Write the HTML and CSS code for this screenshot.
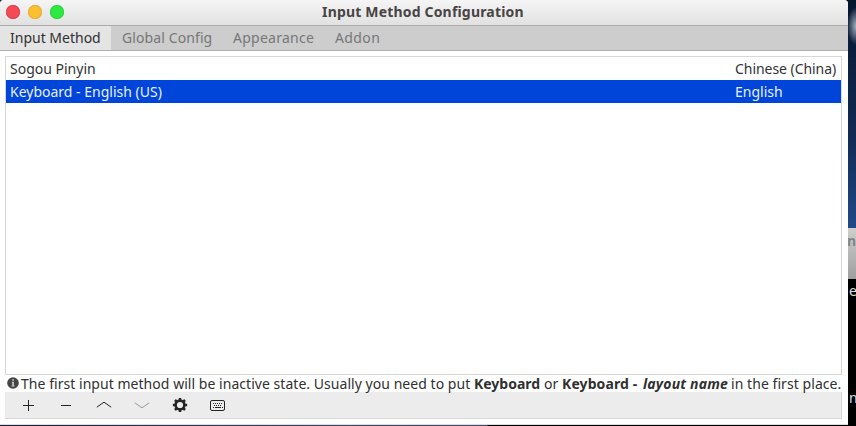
FILE: index.html
```html
<!DOCTYPE html>
<html lang="en">
<head>
<meta charset="utf-8">
<title>Input Method Configuration</title>
<link rel="stylesheet" href="styles.css">
</head>
<body>
<div class="desktop">
  <main class="window">
    <header class="titlebar">
      <div class="lights"><i class="light close"></i><i class="light minimize"></i><i class="light maximize"></i></div>
      <h1 class="title">Input Method Configuration</h1>
    </header>
    <nav class="tabs">
      <span class="tab active t-input">Input Method</span>
      <span class="tab t-global">Global Config</span>
      <span class="tab t-appearance">Appearance</span>
      <span class="tab t-addon">Addon</span>
    </nav>
    <section class="content">
      <div class="list">
        <div class="row"><span class="sogou">Sogou Pinyin</span><span class="lang chinese">Chinese (China)</span></div>
        <div class="row selected"><span class="keyboard">Keyboard - English (US)</span><span class="lang english">English</span></div>
      </div>
      <div class="info">
        <svg class="info-icon" width="12" height="12" viewBox="0 0 12 12"><circle cx="6" cy="6" r="5.8" fill="#454545"/><path d="M5.2 2.2h1.7v1.6H5.2zM4.8 4.8h2.1v3.6h.6v1H4.6v-1h.7V5.7h-.5z" fill="#ccc"/></svg>
        <span class="info-a">The first input method will be inactive state. Usually you need to put</span>
        <b class="info-b">Keyboard</b>
        <span class="info-c">or</span>
        <b class="info-d">Keyboard -</b>
        <b class="info-e"><i>layout name</i></b>
        <span class="info-f">in the first place.</span>
      </div>
      <div class="toolbar">
        <svg class="tool" viewBox="0 0 16 16"><path d="M8.5 3v11M3 8.5h11"/></svg>
        <svg class="tool" viewBox="0 0 16 16"><path d="M3 8.5h10"/></svg>
        <svg class="tool" viewBox="0 0 16 16"><path d="M.8 10.2 8 5.2l7.2 5"/></svg>
        <svg class="tool faded" viewBox="0 0 16 16"><path d="M.8 5.8 8 10.8l7.2-5"/></svg>
        <svg class="tool" viewBox="0 0 16 16"><circle cx="8" cy="8" r="4.4" stroke-width="2.6"/><path stroke-width="2.5" d="M8 .9v2.5M8 12.6v2.5M.9 8h2.5M12.6 8h2.5M3 3l1.8 1.8M11.2 11.2l1.8 1.8M3 13l1.8-1.8M11.2 4.8l1.8-1.8"/></svg>
        <svg class="tool" viewBox="0 0 16 16"><rect x=".5" y="3.5" width="14" height="10" rx="1.5"/><path stroke-dasharray="1 1" d="M3 6.5h10M4 8.5h8M3 10.5h1M12 10.5h1"/><path d="M5 10.5h6"/></svg>
      </div>
    </section>
  </main>
  <aside class="behind">
    <div class="sky"></div>
    <div class="back-title">n</div>
    <div class="terminal"><span>e</span><span>n</span></div>
  </aside>
</div>
</body>
</html>
```
FILE: styles.css
```css
* { box-sizing: border-box; }
body { margin: 0; font: 14px/23px "Noto Sans", "Open Sans", sans-serif; color: #333; }
.desktop { width: 856px; height: 426px; display: flex; overflow: hidden; background: linear-gradient(90deg, #17203f, #38436b 330px, #454b70 487px, #000 488px); }
.window { width: 848px; height: 425px; background: #fff; border-radius: 4px 4px 0 0; overflow: hidden; flex: none; border-bottom: 1px solid #ddd; }
.titlebar { height: 26px; display: grid; grid-template-columns: 322px 1fr; background: linear-gradient(#f5f5f5, #e1e1e1); border-bottom: 1px solid #aaa; }
.lights { display: flex; gap: 8px; padding: 5px 0 0 6px; }
.light { width: 14px; height: 14px; border-radius: 50%; }
.close { background: #f24b55; box-shadow: inset 0 0 0 1px #df414c; }
.minimize { background: #fbc02f; box-shadow: inset 0 0 0 1px #e4ac34; }
.maximize { background: #2cea41; box-shadow: inset 0 0 0 1px #30cf40; }
.title { margin: 0; font-size: 14px; line-height: 24px; font-weight: 700; color: #484444; white-space: nowrap; letter-spacing: .18px; }
.tabs { height: 25px; display: flex; background: #cdcdcd; border-bottom: 1px solid #b0b0b0; color: #777; line-height: 24px; white-space: nowrap; }
.tab { padding-left: 11px; }
.tab.active { background: #e4e4e4; color: #303030; padding-left: 10px; }
.t-input { width: 111px; }
.t-global { width: 111px; letter-spacing: .1px; }
.t-appearance { width: 102px; letter-spacing: .25px; }
.t-addon { letter-spacing: .4px; }
.content { padding: 5px 6px 0 5px; }
.list { height: 319px; border: 1px solid #d8d8d8; }
.row { height: 23px; padding-left: 4px; display: grid; grid-template-columns: 725px 1fr; white-space: nowrap; line-height: 24px; }
.chinese { letter-spacing: -.05px; }
.selected { background: #0045da; color: #e8f0ff; }
.info { height: 17px; display: flex; line-height: 18px; white-space: nowrap; color: #303030; }
.info-icon { margin: 2px 2px 0 2px; flex: none; }
.info > span, .info > b { flex: none; }
.info-a { width: 453px; letter-spacing: .04px; }
.info-b { width: 70px; }
.info-c { width: 18px; }
.info-d { width: 81px; letter-spacing: .1px; }
.info-e { width: 88px; letter-spacing: .18px; }
.info-f { letter-spacing: .06px; }
.toolbar { height: 27px; display: flex; gap: 22px; padding: 5px 0 0 15px; background: #ececec; border: 1px solid #d8d8d8; border-width: 0 1px 1px 0; }
.tool { width: 16px; height: 16px; fill: none; stroke: #242424; stroke-width: 1; }
.faded { stroke: #999; }
.behind { width: 8px; height: 426px; overflow: hidden; flex: none; background: #000; }
.sky { height: 228px; background: radial-gradient(ellipse 9px 19px at 8px 26px, #a2aebe, transparent), linear-gradient(#07162f, #112a55 60%, #204989); }
.back-title { height: 51px; background: linear-gradient(#cecece, #9f9f9f); color: #858585; font-weight: bold; line-height: 26px; text-indent: -1px; }
.terminal { height: 147px; color: #ddd; display: flex; flex-direction: column; justify-content: space-between; padding: 0 0 17px 1px; }
```
